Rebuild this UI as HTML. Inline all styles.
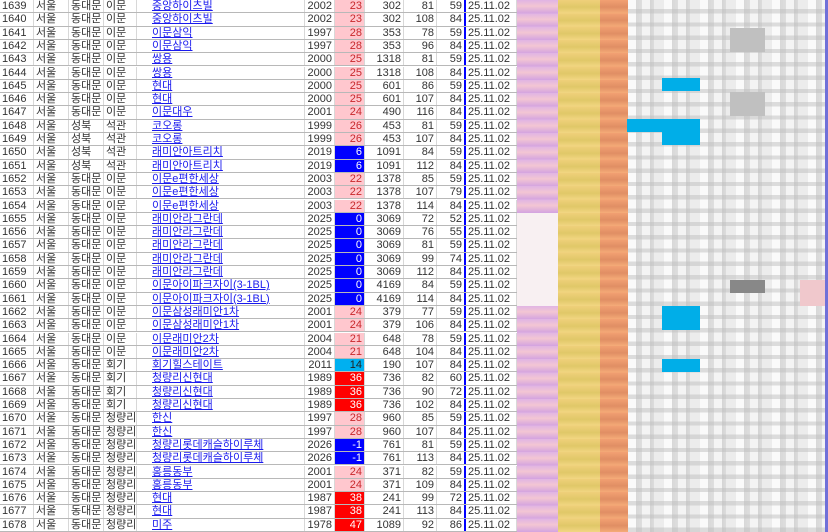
<!DOCTYPE html>
<html><head><meta charset="utf-8"><style>
*{margin:0;padding:0;box-sizing:border-box}
body{width:828px;height:532px;overflow:hidden;background:#fff;font-family:"Liberation Sans","Noto Sans CJK KR","NanumGothic",sans-serif;font-size:11px;color:#333;position:relative}
.r{position:absolute;left:0;width:517px;height:13.3px;display:flex;border-bottom:1px solid #b8b8b8;background:#fff}
.r span{display:block;height:100%;line-height:12.5px;border-right:1px solid #d8d8d8;white-space:nowrap;overflow:hidden;padding:0 2px}
.a{width:34px}.b{width:35px}.c{width:35px}.d{width:33px}
.e{width:168px;padding-left:15px!important;color:#1a1aee;text-decoration:underline}
.f{width:30px;text-align:right}.g{width:30px;text-align:right;background:#ffc7ce;color:#c8282c}
.h{width:39px;text-align:right}.i{width:33px;text-align:right}.j{width:29px;text-align:right;border-right:2px solid #0000ff!important}
.k{width:51px}
.g.bl{background:#0000ff;color:#fff}.g.rd{background:#ff0000;color:#fff}.g.cy{background:#00b0f0;color:#222}
.bz{position:absolute;top:0;height:532px}
</style></head><body>
<div class="bz" style="left:517px;width:41px;background:repeating-linear-gradient(180deg,#e0b4e4 0,#f3c6d3 6px,#d4a4e0 13.3px)"></div>
<div class="bz" style="left:517px;width:41px;top:213px;height:93px;background:#f8f0f2"></div>
<div class="bz" style="left:558px;width:42px;background:repeating-linear-gradient(180deg,#efd07a 0,#e0c868 7px,#f2d682 13.3px)"></div>
<div class="bz" style="left:600px;width:28px;background:repeating-linear-gradient(180deg,#f2a072 0,#e08e64 7px,#f5ab78 13.3px)"></div>
<div class="bz" style="left:628px;width:197px;background:repeating-linear-gradient(90deg,#fafafa 0,#fafafa 8px,#d8d8d8 8px,#dedede 14px,#f4f4f4 14px,#f4f4f4 22px,#d4d4d4 22px,#dcdcdc 26px,#ececec 26px,#ececec 36px)"></div>
<div class="bz" style="left:628px;width:197px;background:repeating-linear-gradient(180deg,transparent 0,transparent 9px,rgba(190,190,190,.5) 9px,rgba(190,190,190,.5) 13.3px)"></div>
<div class="bz" style="left:825px;width:3px;background:#7070d8"></div>
<div class="bz" style="left:662px;top:78px;width:38px;height:13px;background:#00aee8"></div>
<div class="bz" style="left:627px;top:119px;width:73px;height:13px;background:#00aee8"></div>
<div class="bz" style="left:662px;top:131px;width:38px;height:14px;background:#00aee8"></div>
<div class="bz" style="left:662px;top:306px;width:38px;height:24px;background:#00aee8"></div>
<div class="bz" style="left:662px;top:359px;width:38px;height:13px;background:#00aee8"></div>
<div class="bz" style="left:730px;top:280px;width:35px;height:13px;background:#888"></div>
<div class="bz" style="left:730px;top:28px;width:35px;height:24px;background:#c0c0c0"></div>
<div class="bz" style="left:730px;top:92px;width:35px;height:24px;background:#c0c0c0"></div>
<div class="bz" style="left:800px;top:280px;width:25px;height:26px;background:#f0c8cc"></div>

<div class="r" style="top:0px"><span class="a">1639</span><span class="b">서울</span><span class="c">동대문</span><span class="d">이문</span><span class="e">중앙하이츠빌</span><span class="f">2002</span><span class="g">23</span><span class="h">302</span><span class="i">81</span><span class="j">59</span><span class="k">25.11.02</span></div>
<div class="r" style="top:13.3px"><span class="a">1640</span><span class="b">서울</span><span class="c">동대문</span><span class="d">이문</span><span class="e">중앙하이츠빌</span><span class="f">2002</span><span class="g">23</span><span class="h">302</span><span class="i">108</span><span class="j">84</span><span class="k">25.11.02</span></div>
<div class="r" style="top:26.6px"><span class="a">1641</span><span class="b">서울</span><span class="c">동대문</span><span class="d">이문</span><span class="e">이문삼익</span><span class="f">1997</span><span class="g">28</span><span class="h">353</span><span class="i">78</span><span class="j">59</span><span class="k">25.11.02</span></div>
<div class="r" style="top:39.9px"><span class="a">1642</span><span class="b">서울</span><span class="c">동대문</span><span class="d">이문</span><span class="e">이문삼익</span><span class="f">1997</span><span class="g">28</span><span class="h">353</span><span class="i">96</span><span class="j">84</span><span class="k">25.11.02</span></div>
<div class="r" style="top:53.2px"><span class="a">1643</span><span class="b">서울</span><span class="c">동대문</span><span class="d">이문</span><span class="e">쌍용</span><span class="f">2000</span><span class="g">25</span><span class="h">1318</span><span class="i">81</span><span class="j">59</span><span class="k">25.11.02</span></div>
<div class="r" style="top:66.5px"><span class="a">1644</span><span class="b">서울</span><span class="c">동대문</span><span class="d">이문</span><span class="e">쌍용</span><span class="f">2000</span><span class="g">25</span><span class="h">1318</span><span class="i">108</span><span class="j">84</span><span class="k">25.11.02</span></div>
<div class="r" style="top:79.8px"><span class="a">1645</span><span class="b">서울</span><span class="c">동대문</span><span class="d">이문</span><span class="e">현대</span><span class="f">2000</span><span class="g">25</span><span class="h">601</span><span class="i">86</span><span class="j">59</span><span class="k">25.11.02</span></div>
<div class="r" style="top:93.1px"><span class="a">1646</span><span class="b">서울</span><span class="c">동대문</span><span class="d">이문</span><span class="e">현대</span><span class="f">2000</span><span class="g">25</span><span class="h">601</span><span class="i">107</span><span class="j">84</span><span class="k">25.11.02</span></div>
<div class="r" style="top:106.4px"><span class="a">1647</span><span class="b">서울</span><span class="c">동대문</span><span class="d">이문</span><span class="e">이문대우</span><span class="f">2001</span><span class="g">24</span><span class="h">490</span><span class="i">116</span><span class="j">84</span><span class="k">25.11.02</span></div>
<div class="r" style="top:119.7px"><span class="a">1648</span><span class="b">서울</span><span class="c">성북</span><span class="d">석관</span><span class="e">코오롱</span><span class="f">1999</span><span class="g">26</span><span class="h">453</span><span class="i">81</span><span class="j">59</span><span class="k">25.11.02</span></div>
<div class="r" style="top:133px"><span class="a">1649</span><span class="b">서울</span><span class="c">성북</span><span class="d">석관</span><span class="e">코오롱</span><span class="f">1999</span><span class="g">26</span><span class="h">453</span><span class="i">107</span><span class="j">84</span><span class="k">25.11.02</span></div>
<div class="r" style="top:146.3px"><span class="a">1650</span><span class="b">서울</span><span class="c">성북</span><span class="d">석관</span><span class="e">래미안아트리치</span><span class="f">2019</span><span class="g bl">6</span><span class="h">1091</span><span class="i">84</span><span class="j">59</span><span class="k">25.11.02</span></div>
<div class="r" style="top:159.6px"><span class="a">1651</span><span class="b">서울</span><span class="c">성북</span><span class="d">석관</span><span class="e">래미안아트리치</span><span class="f">2019</span><span class="g bl">6</span><span class="h">1091</span><span class="i">112</span><span class="j">84</span><span class="k">25.11.02</span></div>
<div class="r" style="top:172.9px"><span class="a">1652</span><span class="b">서울</span><span class="c">동대문</span><span class="d">이문</span><span class="e">이문e편한세상</span><span class="f">2003</span><span class="g">22</span><span class="h">1378</span><span class="i">85</span><span class="j">59</span><span class="k">25.11.02</span></div>
<div class="r" style="top:186.2px"><span class="a">1653</span><span class="b">서울</span><span class="c">동대문</span><span class="d">이문</span><span class="e">이문e편한세상</span><span class="f">2003</span><span class="g">22</span><span class="h">1378</span><span class="i">107</span><span class="j">79</span><span class="k">25.11.02</span></div>
<div class="r" style="top:199.5px"><span class="a">1654</span><span class="b">서울</span><span class="c">동대문</span><span class="d">이문</span><span class="e">이문e편한세상</span><span class="f">2003</span><span class="g">22</span><span class="h">1378</span><span class="i">114</span><span class="j">84</span><span class="k">25.11.02</span></div>
<div class="r" style="top:212.8px"><span class="a">1655</span><span class="b">서울</span><span class="c">동대문</span><span class="d">이문</span><span class="e">래미안라그란데</span><span class="f">2025</span><span class="g bl">0</span><span class="h">3069</span><span class="i">72</span><span class="j">52</span><span class="k">25.11.02</span></div>
<div class="r" style="top:226.1px"><span class="a">1656</span><span class="b">서울</span><span class="c">동대문</span><span class="d">이문</span><span class="e">래미안라그란데</span><span class="f">2025</span><span class="g bl">0</span><span class="h">3069</span><span class="i">76</span><span class="j">55</span><span class="k">25.11.02</span></div>
<div class="r" style="top:239.4px"><span class="a">1657</span><span class="b">서울</span><span class="c">동대문</span><span class="d">이문</span><span class="e">래미안라그란데</span><span class="f">2025</span><span class="g bl">0</span><span class="h">3069</span><span class="i">81</span><span class="j">59</span><span class="k">25.11.02</span></div>
<div class="r" style="top:252.7px"><span class="a">1658</span><span class="b">서울</span><span class="c">동대문</span><span class="d">이문</span><span class="e">래미안라그란데</span><span class="f">2025</span><span class="g bl">0</span><span class="h">3069</span><span class="i">99</span><span class="j">74</span><span class="k">25.11.02</span></div>
<div class="r" style="top:266px"><span class="a">1659</span><span class="b">서울</span><span class="c">동대문</span><span class="d">이문</span><span class="e">래미안라그란데</span><span class="f">2025</span><span class="g bl">0</span><span class="h">3069</span><span class="i">112</span><span class="j">84</span><span class="k">25.11.02</span></div>
<div class="r" style="top:279.3px"><span class="a">1660</span><span class="b">서울</span><span class="c">동대문</span><span class="d">이문</span><span class="e">이문아이파크자이(3-1BL)</span><span class="f">2025</span><span class="g bl">0</span><span class="h">4169</span><span class="i">84</span><span class="j">59</span><span class="k">25.11.02</span></div>
<div class="r" style="top:292.6px"><span class="a">1661</span><span class="b">서울</span><span class="c">동대문</span><span class="d">이문</span><span class="e">이문아이파크자이(3-1BL)</span><span class="f">2025</span><span class="g bl">0</span><span class="h">4169</span><span class="i">114</span><span class="j">84</span><span class="k">25.11.02</span></div>
<div class="r" style="top:305.9px"><span class="a">1662</span><span class="b">서울</span><span class="c">동대문</span><span class="d">이문</span><span class="e">이문삼성래미안1차</span><span class="f">2001</span><span class="g">24</span><span class="h">379</span><span class="i">77</span><span class="j">59</span><span class="k">25.11.02</span></div>
<div class="r" style="top:319.2px"><span class="a">1663</span><span class="b">서울</span><span class="c">동대문</span><span class="d">이문</span><span class="e">이문삼성래미안1차</span><span class="f">2001</span><span class="g">24</span><span class="h">379</span><span class="i">106</span><span class="j">84</span><span class="k">25.11.02</span></div>
<div class="r" style="top:332.5px"><span class="a">1664</span><span class="b">서울</span><span class="c">동대문</span><span class="d">이문</span><span class="e">이문래미안2차</span><span class="f">2004</span><span class="g">21</span><span class="h">648</span><span class="i">78</span><span class="j">59</span><span class="k">25.11.02</span></div>
<div class="r" style="top:345.8px"><span class="a">1665</span><span class="b">서울</span><span class="c">동대문</span><span class="d">이문</span><span class="e">이문래미안2차</span><span class="f">2004</span><span class="g">21</span><span class="h">648</span><span class="i">104</span><span class="j">84</span><span class="k">25.11.02</span></div>
<div class="r" style="top:359.1px"><span class="a">1666</span><span class="b">서울</span><span class="c">동대문</span><span class="d">회기</span><span class="e">회기힐스테이트</span><span class="f">2011</span><span class="g cy">14</span><span class="h">190</span><span class="i">107</span><span class="j">84</span><span class="k">25.11.02</span></div>
<div class="r" style="top:372.4px"><span class="a">1667</span><span class="b">서울</span><span class="c">동대문</span><span class="d">회기</span><span class="e">청량리신현대</span><span class="f">1989</span><span class="g rd">36</span><span class="h">736</span><span class="i">82</span><span class="j">60</span><span class="k">25.11.02</span></div>
<div class="r" style="top:385.7px"><span class="a">1668</span><span class="b">서울</span><span class="c">동대문</span><span class="d">회기</span><span class="e">청량리신현대</span><span class="f">1989</span><span class="g rd">36</span><span class="h">736</span><span class="i">90</span><span class="j">72</span><span class="k">25.11.02</span></div>
<div class="r" style="top:399px"><span class="a">1669</span><span class="b">서울</span><span class="c">동대문</span><span class="d">회기</span><span class="e">청량리신현대</span><span class="f">1989</span><span class="g rd">36</span><span class="h">736</span><span class="i">102</span><span class="j">84</span><span class="k">25.11.02</span></div>
<div class="r" style="top:412.3px"><span class="a">1670</span><span class="b">서울</span><span class="c">동대문</span><span class="d">청량리</span><span class="e">한신</span><span class="f">1997</span><span class="g">28</span><span class="h">960</span><span class="i">85</span><span class="j">59</span><span class="k">25.11.02</span></div>
<div class="r" style="top:425.6px"><span class="a">1671</span><span class="b">서울</span><span class="c">동대문</span><span class="d">청량리</span><span class="e">한신</span><span class="f">1997</span><span class="g">28</span><span class="h">960</span><span class="i">107</span><span class="j">84</span><span class="k">25.11.02</span></div>
<div class="r" style="top:438.9px"><span class="a">1672</span><span class="b">서울</span><span class="c">동대문</span><span class="d">청량리</span><span class="e">청량리롯데캐슬하이루체</span><span class="f">2026</span><span class="g bl">-1</span><span class="h">761</span><span class="i">81</span><span class="j">59</span><span class="k">25.11.02</span></div>
<div class="r" style="top:452.2px"><span class="a">1673</span><span class="b">서울</span><span class="c">동대문</span><span class="d">청량리</span><span class="e">청량리롯데캐슬하이루체</span><span class="f">2026</span><span class="g bl">-1</span><span class="h">761</span><span class="i">113</span><span class="j">84</span><span class="k">25.11.02</span></div>
<div class="r" style="top:465.5px"><span class="a">1674</span><span class="b">서울</span><span class="c">동대문</span><span class="d">청량리</span><span class="e">홍릉동부</span><span class="f">2001</span><span class="g">24</span><span class="h">371</span><span class="i">82</span><span class="j">59</span><span class="k">25.11.02</span></div>
<div class="r" style="top:478.8px"><span class="a">1675</span><span class="b">서울</span><span class="c">동대문</span><span class="d">청량리</span><span class="e">홍릉동부</span><span class="f">2001</span><span class="g">24</span><span class="h">371</span><span class="i">109</span><span class="j">84</span><span class="k">25.11.02</span></div>
<div class="r" style="top:492.1px"><span class="a">1676</span><span class="b">서울</span><span class="c">동대문</span><span class="d">청량리</span><span class="e">현대</span><span class="f">1987</span><span class="g rd">38</span><span class="h">241</span><span class="i">99</span><span class="j">72</span><span class="k">25.11.02</span></div>
<div class="r" style="top:505.4px"><span class="a">1677</span><span class="b">서울</span><span class="c">동대문</span><span class="d">청량리</span><span class="e">현대</span><span class="f">1987</span><span class="g rd">38</span><span class="h">241</span><span class="i">113</span><span class="j">84</span><span class="k">25.11.02</span></div>
<div class="r" style="top:518.7px"><span class="a">1678</span><span class="b">서울</span><span class="c">동대문</span><span class="d">청량리</span><span class="e">미주</span><span class="f">1978</span><span class="g rd">47</span><span class="h">1089</span><span class="i">92</span><span class="j">86</span><span class="k">25.11.02</span></div>
</body></html>
